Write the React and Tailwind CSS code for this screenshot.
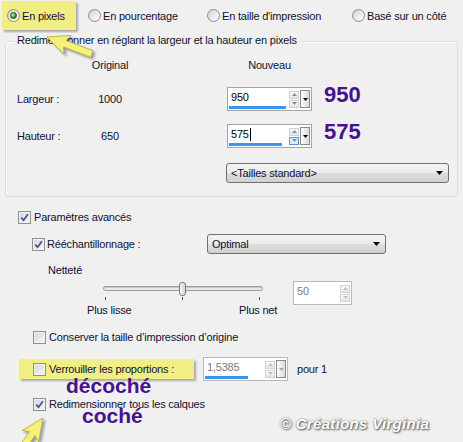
import React from 'react';

function Radio({ on }) {
  return (
    <span className="flex h-[13px] w-[13px] shrink-0 items-center justify-center rounded-full border border-[#8b8b8b] bg-[linear-gradient(135deg,#cfcfcf,#f4f4f4_70%,#ffffff)]">
      {on && (
        <span className="h-[7px] w-[7px] rounded-full border border-[#24511d] bg-[radial-gradient(circle_at_35%_35%,#b6f7a4,#3fa52b_55%,#1c6313)]" />
      )}
    </span>
  );
}

function Box({ on }) {
  return (
    <span className="flex h-[13px] w-[13px] shrink-0 items-center justify-center border border-[#8e8f8f] bg-[linear-gradient(135deg,#d6d6d6,#f7f7f7)] shadow-[inset_0_0_0_1px_#f2f2f2]">
      {on && (
        <svg width="9" height="9" viewBox="0 0 9 9">
          <path d="M1.2 4.6 L3.6 7.2 L7.9 1.3" fill="none" stroke="#3f559b" strokeWidth="1.8" />
        </svg>
      )}
    </span>
  );
}

function Tri({ up, color }) {
  return (
    <svg width="5" height="3" viewBox="0 0 5 3">
      <polygon points={up ? '2.5,0 5,3 0,3' : '0,0 5,0 2.5,3'} fill={color} />
    </svg>
  );
}

function SpinBox({ className, value, bar, disabled, drop, caret, hiDown }) {
  const tri = disabled ? '#c0c0c0' : '#6f93c8';
  return (
    <div className={`flex shrink-0 border bg-white ${disabled ? 'border-[#b9b9b9]' : 'border-[#a5a5a5]'} ${className}`}>
      <div className="relative flex flex-1 items-start pl-[3px] pt-[2px]">
        <span className={disabled ? 'text-[#7a7a7a]' : 'text-black'}>{value}</span>
        {caret && <span className="ml-px mt-px h-[13px] w-px bg-black" />}
        {bar ? <span className="absolute bottom-[1px] left-[1px] h-[3px] bg-[#3b94ee]" style={{ width: bar }} /> : null}
      </div>
      <div className="flex w-[10px] flex-col justify-center gap-[1px]">
        <div className="flex h-[8px] items-center justify-center border border-[#d2d2d2] bg-[linear-gradient(#fbfbfb,#e4e4e4)]">
          <Tri up color={tri} />
        </div>
        <div
          className={`flex h-[8px] items-center justify-center border ${
            hiDown ? 'border-[#5b8fd6] bg-[#dcecfc]' : 'border-[#d2d2d2] bg-[linear-gradient(#fbfbfb,#e4e4e4)]'
          }`}
        >
          <Tri color={tri} />
        </div>
      </div>
      {drop ? (
        <div className="my-auto ml-[1px] mr-[1px] flex h-[18px] w-[10px] items-center justify-center border border-[#8c8c8c] bg-[linear-gradient(90deg,#fdfdfd,#dadada)]">
          <Tri color={disabled ? '#a8a8a8' : '#000'} />
        </div>
      ) : (
        <div className="w-[1px]" />
      )}
    </div>
  );
}

function Select({ className, label }) {
  return (
    <div
      className={`flex shrink-0 items-center justify-between rounded-[3px] border border-[#707070] bg-[linear-gradient(#f3f3f3_0%,#ebebeb_50%,#dedede_51%,#d0d0d0_100%)] pl-[4px] pr-[5px] ${className}`}
    >
      <span>{label}</span>
      <svg width="7" height="4" viewBox="0 0 7 4">
        <polygon points="0,0 7,0 3.5,4" fill="#000" />
      </svg>
    </div>
  );
}

function Arrow({ x, y, angle }) {
  return (
    <g transform={`translate(${x} ${y}) rotate(${angle})`}>
      <polygon
        points="0,0 22,-10 19,-3.5 48,-3.5 48,3.5 19,3.5 22,10"
        fill="#f5f176"
        stroke="#b5ae45"
        strokeWidth="0.8"
        strokeLinejoin="round"
      />
    </g>
  );
}

export default function App() {
  return (
    <div className="relative h-[442px] w-[463px] overflow-hidden bg-[#f0f0f0] font-['Liberation_Sans',Arial,sans-serif] text-[11px] leading-[14px] tracking-[-0.2px] text-[#101030]">
      {/* resize mode */}
      <div className="flex h-[30px] items-center pt-[1px]">
        <div className="ml-[2px] flex h-[29px] w-[74px] items-center bg-[#f1ef84] pl-[5px] shadow-[2px_2px_2px_rgba(0,0,0,0.3)]">
          <Radio on />
          <span className="ml-[2px]">En pixels</span>
        </div>
        <div className="ml-[12px] flex w-[119px] items-center">
          <Radio />
          <span className="ml-[2px]">En pourcentage</span>
        </div>
        <div className="flex w-[145px] items-center">
          <Radio />
          <span className="ml-[2px]">En taille d'impression</span>
        </div>
        <div className="flex items-center">
          <Radio />
          <span className="ml-[2px]">Basé sur un côté</span>
        </div>
      </div>

      {/* pixel group */}
      <div className="relative mx-[5px] mt-[11px] h-[156px] rounded-[3px] border border-[#d5dfe5] pl-[11px] shadow-[inset_1px_1px_0_#ffffff]">
        <span className="absolute left-[7px] top-[-9px] bg-[#f0f0f0] px-[4px]">
          Redimensionner en réglant la largeur et la hauteur en pixels
        </span>
        <div className="mt-[16px] flex h-[14px] items-center">
          <span className="w-[58px]" />
          <span className="w-[70px] text-center">Original</span>
          <span className="ml-[82px] w-[85px] text-center">Nouveau</span>
        </div>
        <div className="mt-[15px] flex h-[24px] items-center">
          <span className="w-[58px]">Largeur :</span>
          <span className="w-[70px] text-center">1000</span>
          <SpinBox className="ml-[82px] h-[24px] w-[85px]" value="950" bar={57} drop />
          <span className="ml-[12px] -mt-[4px] self-start text-[22px] font-bold leading-[24px] tracking-normal text-[#47128e]">
            950
          </span>
        </div>
        <div className="mt-[13px] flex h-[24px] items-center">
          <span className="w-[58px]">Hauteur :</span>
          <span className="w-[70px] text-center">650</span>
          <SpinBox className="ml-[82px] h-[24px] w-[85px]" value="575" bar={53} drop caret hiDown />
          <span className="ml-[12px] -mt-[4px] self-start text-[22px] font-bold leading-[24px] tracking-normal text-[#47128e]">
            575
          </span>
        </div>
        <Select className="ml-[209px] mt-[15px] h-[20px] w-[223px]" label={'<Tailles standard>'} />
      </div>

      {/* advanced */}
      <div className="mt-[13px] flex h-[14px] items-center pl-[18px]">
        <Box on />
        <span className="ml-[3px]">Paramètres avancés</span>
      </div>
      <div className="mt-[10px] flex h-[20px] items-center pl-[32px]">
        <div className="flex w-[175px] items-center">
          <Box on />
          <span className="ml-[2px]">Rééchantillonnage :</span>
        </div>
        <Select className="h-[20px] w-[179px]" label="Optimal" />
      </div>
      <div className="mt-[9px] h-[14px] pl-[48px]">Netteté</div>
      <div className="mt-[4px] flex items-start">
        <div className="relative ml-[80px] h-[38px] w-[200px] shrink-0">
          <div className="absolute left-[23px] top-[5px] h-[5px] w-[160px] rounded-full border border-[#9c9c9c] bg-[#e8eaea] shadow-[inset_0_1px_0_#c8c8c8]" />
          <div className="absolute left-[99px] top-[1px] h-[14px] w-[7px] rounded-[3px] border border-[#6d7b8d] bg-[linear-gradient(90deg,#f6f6f6,#d0d7df)]" />
          <div className="absolute left-[25px] top-[16px] h-[3px] w-px bg-[#555]" />
          <div className="absolute left-[102px] top-[16px] h-[3px] w-px bg-[#555]" />
          <div className="absolute left-[179px] top-[16px] h-[3px] w-px bg-[#555]" />
          <span className="absolute left-[7px] top-[22px]">Plus lisse</span>
          <span className="absolute left-[159px] top-[22px]">Plus net</span>
        </div>
        <SpinBox className="ml-[13px] h-[24px] w-[59px]" value="50" disabled />
      </div>
      <div className="mt-[11px] flex h-[14px] items-center pl-[33px]">
        <Box />
        <span className="ml-[3px]">Conserver la taille d’impression d’origine</span>
      </div>
      <div className="mt-[13px] flex h-[24px] items-center">
        <div className="ml-[19px] flex h-[20px] w-[175px] items-center bg-[#f1ef84] pl-[14px] shadow-[2px_2px_2px_rgba(0,0,0,0.3)]">
          <Box />
          <span className="ml-[3px]">Verrouiller les proportions :</span>
        </div>
        <SpinBox className="ml-[9px] h-[24px] w-[85px]" value="1,5385" bar={43} drop disabled />
        <span className="ml-[9px]">pour 1</span>
      </div>
      <div className="mt-[16px] flex h-[14px] items-center pl-[33px]">
        <Box on />
        <span className="ml-[3px] leading-[12px]">Redimensionner tous les calques</span>
      </div>

      {/* annotations */}
      <span className="absolute left-[66px] top-[380px] text-[21px] font-bold leading-[12px] tracking-normal text-[#47128e]">
        décoché
      </span>
      <span className="absolute left-[82px] top-[410px] text-[21px] font-bold leading-[12px] tracking-normal text-[#47128e]">
        coché
      </span>
      <span className="absolute left-[280px] top-[416px] text-[15px] font-bold italic leading-[16px] tracking-[0.3px] text-white [text-shadow:1px_1px_2px_#555,0_0_2px_#777]">
        © Créations Virginia
      </span>
      <svg
        className="pointer-events-none absolute left-0 top-0 drop-shadow-[2px_2px_1px_rgba(0,0,0,0.35)]"
        width="463"
        height="442"
      >
        <Arrow x={47} y={37} angle={20.7} />
        <Arrow x={43} y={418} angle={124.7} />
      </svg>
    </div>
  );
}
